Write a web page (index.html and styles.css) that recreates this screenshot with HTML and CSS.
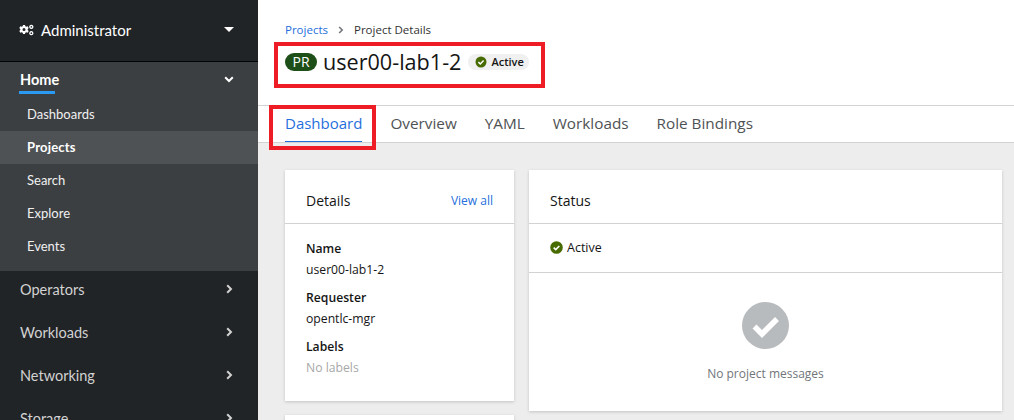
FILE: index.html
```html
<!DOCTYPE html>
<html lang="en">
  <head>
    <title>Project Details</title>
    <link rel="stylesheet" href="styles.css">
  </head>
  <body>
    <nav class="sidebar">
      <div class="perspective">
        <svg class="cogs" viewBox="0 0 15 12" width="15" height="12"><path fill="#fff" fill-rule="evenodd" d="M4 1h2l.3 1.3 1 .5L8.600 2.300 9.700 4 8.700 5l0 1 1 1-1.100 1.700-1.300-.5-1 .5L6 10H4l-.3-1.300-1-.5-1.300.5L.3 7l1-1 0-1-1-1 1.100-1.700 1.300.5 1-.5zM5 4a1.500 1.500 0 1 0 0 3 1.500 1.500 0 0 0 0-3z"/><path fill="none" stroke="#fff" stroke-width="1.300" d="M12.300 1.300a1.500 1.500 0 1 0 .01 0zM12.300 7.700a1.500 1.500 0 1 0 .01 0z"/></svg>
        <span class="perspective-name">Administrator</span>
        <span class="caret"></span>
      </div>
      <div class="nav-open">
        <div class="nav-head">
          <span class="nav-head-label">Home</span>
          <svg class="chevron" viewBox="0 0 10 7" width="10" height="7"><path d="M1.200 1.200 5 5l3.800-3.800" fill="none" stroke="#fff" stroke-width="2"/></svg>
        </div>
        <a class="sub-item">Dashboards</a>
        <a class="sub-item current">Projects</a>
        <a class="sub-item">Search</a>
        <a class="sub-item">Explore</a>
        <a class="sub-item">Events</a>
      </div>
      <div class="nav-item">Operators<svg class="chevron" viewBox="0 0 7 10" width="7" height="10"><path d="M1.200 1.200 5 5 1.200 8.800" fill="none" stroke="#d2d2d2" stroke-width="2"/></svg></div>
      <div class="nav-item">Workloads<svg class="chevron" viewBox="0 0 7 10" width="7" height="10"><path d="M1.200 1.200 5 5 1.200 8.800" fill="none" stroke="#d2d2d2" stroke-width="2"/></svg></div>
      <div class="nav-item">Networking<svg class="chevron" viewBox="0 0 7 10" width="7" height="10"><path d="M1.200 1.200 5 5 1.200 8.800" fill="none" stroke="#d2d2d2" stroke-width="2"/></svg></div>
      <div class="nav-item">Storage<svg class="chevron" viewBox="0 0 7 10" width="7" height="10"><path d="M1.200 1.200 5 5 1.200 8.800" fill="none" stroke="#d2d2d2" stroke-width="2"/></svg></div>
    </nav>
    <main class="page">
      <header class="page-head">
        <div class="breadcrumb">
          <a class="link">Projects</a>
          <svg class="crumb-sep" viewBox="0 0 7 10" width="6" height="8"><path d="M1.200 1.200 5 5 1.200 8.800" fill="none" stroke="#72767b" stroke-width="2"/></svg>
          <span>Project Details</span>
        </div>
        <div class="title-row callout">
          <span class="pr-badge">PR</span>
          <h1 class="project-name">user00-lab1-2</h1>
          <span class="status-pill">
            <svg class="ok-icon" viewBox="0 0 12 12" width="12" height="12"><circle cx="6" cy="6" r="5.500" fill="#486b00"/><path d="M3.400 6.100 5.300 8l3.300-3.400" fill="none" stroke="#fff" stroke-width="1.500"/></svg>
            Active
          </span>
        </div>
      </header>
      <div class="tabs">
        <a class="tab active callout-tab"><span class="tab-text">Dashboard</span></a>
        <a class="tab">Overview</a>
        <a class="tab">YAML</a>
        <a class="tab">Workloads</a>
        <a class="tab">Role Bindings</a>
      </div>
      <div class="dashboard">
        <div class="left-col">
          <section class="card details">
            <div class="card-head">
              <h2>Details</h2>
              <a class="link view-all">View all</a>
            </div>
            <dl class="details-list">
              <dt>Name</dt>
              <dd>user00-lab1-2</dd>
              <dt>Requester</dt>
              <dd>opentlc-mgr</dd>
              <dt>Labels</dt>
              <dd class="muted">No labels</dd>
            </dl>
          </section>
          <section class="card stub"></section>
        </div>
        <section class="card status">
          <div class="card-head">
            <h2>Status</h2>
          </div>
          <div class="status-row">
            <svg class="ok-icon" viewBox="0 0 12 12" width="13" height="13"><circle cx="6" cy="6" r="5.800" fill="#486b00"/><path d="M3.400 6.100 5.300 8l3.300-3.400" fill="none" stroke="#fff" stroke-width="1.500"/></svg>
            Active
          </div>
          <div class="empty">
            <svg viewBox="0 0 47 47" width="47" height="47"><circle cx="23.500" cy="23.500" r="23.500" fill="#b8bbbe"/><path d="M12.500 24.500 20 32l15-15" fill="none" stroke="#fff" stroke-width="5.500"/></svg>
            <p>No project messages</p>
          </div>
        </section>
      </div>
    </main>
  </body>
</html>
```

FILE: styles.css
```css
html, body {
  height: 100%;
}

body {
  margin: 0;
  display: flex;
  overflow: hidden;
  font-family: "Open Sans", "Liberation Sans", sans-serif;
  font-size: 14px;
  color: #151515;
  background: #ededed;
}

/* sidebar */
.sidebar {
  width: 258px;
  flex: none;
  background: #212427;
  overflow: hidden;
  font-family: "Lato", "Open Sans", sans-serif;
}

.perspective {
  height: 62px;
  box-sizing: border-box;
  display: flex;
  align-items: center;
  padding: 0 24px 2px 19px;
  border-bottom: 1px solid #030303;
  color: #fff;
  font-size: 15px;
}

.cogs {
  margin-right: 7px;
}

.perspective-name {
  flex: 1;
}

.caret {
  width: 0;
  height: 0;
  border-left: 5px solid transparent;
  border-right: 5px solid transparent;
  border-top: 5px solid #fff;
}

.nav-open {
  height: 209px;
  background: #3c3f42;
}

.nav-head {
  height: 36px;
  box-sizing: border-box;
  display: flex;
  align-items: center;
  justify-content: space-between;
  padding: 0 24px 2px 20px;
  color: #fff;
  font-size: 14.500px;
  font-weight: 700;
}

.nav-head-label {
  position: relative;
}

.nav-head-label::after {
  content: "";
  position: absolute;
  left: -1px;
  right: 4px;
  bottom: -6px;
  height: 3px;
  background: #2b9af3;
}

.sub-item {
  display: block;
  height: 33px;
  line-height: 32px;
  padding-left: 27px;
  color: #f0f0f0;
  font-size: 13px;
}

.sub-item.current {
  background: #4f5255;
  color: #fff;
  font-weight: 700;
  letter-spacing: .2px;
}

.nav-item {
  height: 43px;
  box-sizing: border-box;
  display: flex;
  align-items: center;
  justify-content: space-between;
  padding: 0 25px 7px 20px;
  color: #d2d2d2;
  font-size: 14.500px;
}

/* page header */
.page {
  flex: 1;
  min-width: 0;
}

.page-head {
  height: 106px;
  box-sizing: border-box;
  background: #fff;
  padding: 23px 0 0 27px;
  border-bottom: 1px solid #d2d2d2;
}

.link {
  color: #1f6fdc;
}

.breadcrumb {
  display: flex;
  align-items: center;
  gap: 10px;
  font-size: 11.500px;
  line-height: 14px;
  color: #333;
}

.title-row {
  display: flex;
  align-items: center;
  margin-top: 5px;
}

.callout {
  width: fit-content;
  margin-left: -11px;
  padding: 0 12px 7px 7px;
  height: 46px;
  box-sizing: border-box;
  border: 4px solid #ee1c25;
}

.pr-badge {
  height: 18px;
  width: 32px;
  border-radius: 9px;
  background: #1e4f18;
  color: #fff;
  font-size: 14px;
  line-height: 18px;
  text-align: center;
  margin-right: 6px;
}

.project-name {
  margin: 0;
  font-size: 21.600px;
  font-weight: 400;
  line-height: 30px;
}

.status-pill {
  display: flex;
  align-items: center;
  gap: 4px;
  height: 16px;
  margin-left: 7px;
  padding: 0 5px 0 7px;
  border-radius: 8px;
  background: #f0f0f0;
  font-size: 11px;
  font-weight: 600;
}

/* tabs */
.tabs {
  height: 36px;
  display: flex;
  padding-left: 27px;
  gap: 28px;
  background: #fff;
  border-bottom: 1px solid #d2d2d2;
  font-size: 15.300px;
  color: #4f5255;
}

.tab {
  line-height: 34px;
  height: 36px;
}

.tab.active {
  color: #1f6fdc;
  font-size: 15px;
}

.callout-tab {
  position: relative;
}

.callout-tab::before {
  content: "";
  position: absolute;
  left: -16px;
  right: -14px;
  top: -1px;
  bottom: -8px;
  border: 4px solid #ee1c25;
}

.callout-tab::after {
  content: "";
  position: absolute;
  left: 0;
  right: 0;
  bottom: 0;
  height: 1px;
  background: #1f6fdc;
}

/* dashboard cards */
.dashboard {
  display: flex;
  align-items: flex-start;
  gap: 15px;
  padding: 27px 12px 0 27px;
}

.left-col {
  width: 229px;
  flex: none;
  display: flex;
  flex-direction: column;
  gap: 14px;
}

.card {
  background: #fff;
  box-shadow: 0 1px 3px rgba(3, 3, 3, .18);
}

.status {
  flex: 1;
  height: 241px;
  display: flex;
  flex-direction: column;
}

.stub {
  height: 60px;
}

.card-head {
  height: 53px;
  display: flex;
  align-items: center;
  justify-content: space-between;
  padding: 7px 21px 0;
  box-sizing: border-box;
  height: 54px;
  border-bottom: 1px solid #d2d2d2;
}

.card-head h2 {
  margin: 0;
  font-size: 14px;
  font-weight: 400;
}

.view-all {
  font-size: 12px;
}

.details-list {
  margin: 0;
  padding: 14px 21px 23px;
  font-size: 12.200px;
  line-height: 21px;
}

.details-list dt {
  font-weight: 600;
}

.details-list dd {
  margin: 0 0 7px;
}

.details-list dd.muted {
  margin-bottom: 0;
  color: #a8a8a8;
}

.status-row {
  height: 49px;
  box-sizing: border-box;
  display: flex;
  align-items: center;
  gap: 4px;
  padding: 0 0 2px 21px;
  border-bottom: 1px solid #d2d2d2;
  font-size: 12.500px;
}

.empty {
  flex: 1;
  display: flex;
  flex-direction: column;
  align-items: center;
  padding-top: 29px;
  color: #72767b;
  font-size: 12px;
}

.empty p {
  margin: 16px 0 0;
}
```
